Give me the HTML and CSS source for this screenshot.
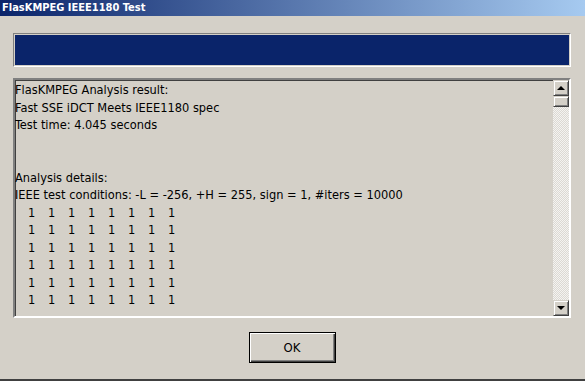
FILE: index.html
```html
<!DOCTYPE html>
<html lang="en">
<head>
  <meta charset="UTF-8" />
  <title>FlasKMPEG IEEE1180 Test</title>
  <link rel="stylesheet" href="styles.css">
</head>
<body>
  <div class="window">
    <div class="titlebar">FlasKMPEG IEEE1180 Test</div>

    <div class="content">
      <div class="progress"><div class="progress-fill"></div></div>

      <div class="textbox">
        <div class="text">
          <div class="line">FlasKMPEG Analysis result:</div>
          <div class="line">Fast SSE iDCT Meets IEEE1180 spec</div>
          <div class="line">Test time: 4.045 seconds</div>
          <div class="line"></div>
          <div class="line"></div>
          <div class="line">Analysis details:</div>
          <div class="line">IEEE test conditions: -L = -256, +H = 255, sign = 1, #iters = 10000</div>
          <div class="line row"><span>1</span><span>1</span><span>1</span><span>1</span><span>1</span><span>1</span><span>1</span><span>1</span></div>
          <div class="line row"><span>1</span><span>1</span><span>1</span><span>1</span><span>1</span><span>1</span><span>1</span><span>1</span></div>
          <div class="line row"><span>1</span><span>1</span><span>1</span><span>1</span><span>1</span><span>1</span><span>1</span><span>1</span></div>
          <div class="line row"><span>1</span><span>1</span><span>1</span><span>1</span><span>1</span><span>1</span><span>1</span><span>1</span></div>
          <div class="line row"><span>1</span><span>1</span><span>1</span><span>1</span><span>1</span><span>1</span><span>1</span><span>1</span></div>
          <div class="line row"><span>1</span><span>1</span><span>1</span><span>1</span><span>1</span><span>1</span><span>1</span><span>1</span></div>
        </div>
        <div class="scrollbar">
          <div class="sb-btn"><span class="arrow up"></span></div>
          <div class="sb-thumb"></div>
          <div class="sb-track"></div>
          <div class="sb-btn"><span class="arrow down"></span></div>
        </div>
      </div>

      <div class="actions">
        <button class="btn">OK</button>
      </div>
    </div>
  </div>
</body>
</html>
```

FILE: styles.css
```css
html, body {
  margin: 0;
  padding: 0;
}

body {
  width: 585px;
  height: 381px;
  overflow: hidden;
  background-color: #d4d0c8;
  font-family: "DejaVu Sans Condensed", "DejaVu Sans", sans-serif;
}

.window {
  height: 379px;
  border-bottom: 2px solid #404040;
  display: flex;
  flex-direction: column;
}

.titlebar {
  height: 16px;
  line-height: 15px;
  padding-left: 2px;
  color: #fff;
  font-weight: bold;
  font-size: 11px;
  background: linear-gradient(to right, #0a246a, #a6caf0);
}

.content {
  padding: 17px 14px 0 13px;
  display: flex;
  flex-direction: column;
}

.progress {
  border-top: 1px solid #808080;
  border-left: 1px solid #808080;
  border-bottom: 1px solid #fff;
  border-right: 1px solid #fff;
  padding: 1px;
  height: 30px;
}

.progress-fill {
  height: 100%;
  background-color: #0a246a;
}

.textbox {
  margin-top: 11px;
  height: 236px;
  display: flex;
  border-top: 2px solid #808080;
  border-left: 2px solid #808080;
  border-bottom: 2px solid #fff;
  border-right: 2px solid #fff;
  box-shadow: inset 1px 1px 0 #404040;
}

.text {
  flex: 1;
  padding-top: 1px;
  font-size: 12.7px;
  line-height: 17.5px;
  color: #000;
  white-space: nowrap;
  overflow: hidden;
}

.line {
  height: 17.5px;
}

.row {
  display: flex;
  padding-left: 13px;
}

.row span {
  width: 20px;
}

.scrollbar {
  width: 16px;
  display: flex;
  flex-direction: column;
  background-color: #ebe9e5;
  background-image: repeating-conic-gradient(#f4f3f1 0 25%, #dcd9d3 0 50%);
  background-size: 2px 2px;
}

.sb-btn, .sb-thumb {
  height: 16px;
  box-sizing: border-box;
  background-color: #d4d0c8;
  border-top: 1px solid #d4d0c8;
  border-left: 1px solid #d4d0c8;
  border-right: 1px solid #404040;
  border-bottom: 1px solid #404040;
  box-shadow: inset 1px 1px 0 #fff, inset -1px -1px 0 #808080;
  display: flex;
  align-items: center;
  justify-content: center;
}

.sb-thumb {
  height: 11px;
}

.sb-track {
  flex: 1;
}

.arrow {
  width: 0;
  height: 0;
  border-left: 4px solid transparent;
  border-right: 4px solid transparent;
}

.arrow.up {
  border-bottom: 4px solid #000;
}

.arrow.down {
  border-top: 4px solid #000;
}

.actions {
  display: flex;
  justify-content: center;
  margin-top: 14px;
}

.btn {
  width: 87px;
  height: 31px;
  font-family: "DejaVu Sans Condensed", "DejaVu Sans", sans-serif;
  font-size: 13px;
  color: #000;
  background-color: #d4d0c8;
  border: 1px solid #000;
  box-shadow: inset 1px 1px 0 #fff, inset -1px -1px 0 #404040, inset -2px -2px 0 #808080;
  padding: 0;
}
```
